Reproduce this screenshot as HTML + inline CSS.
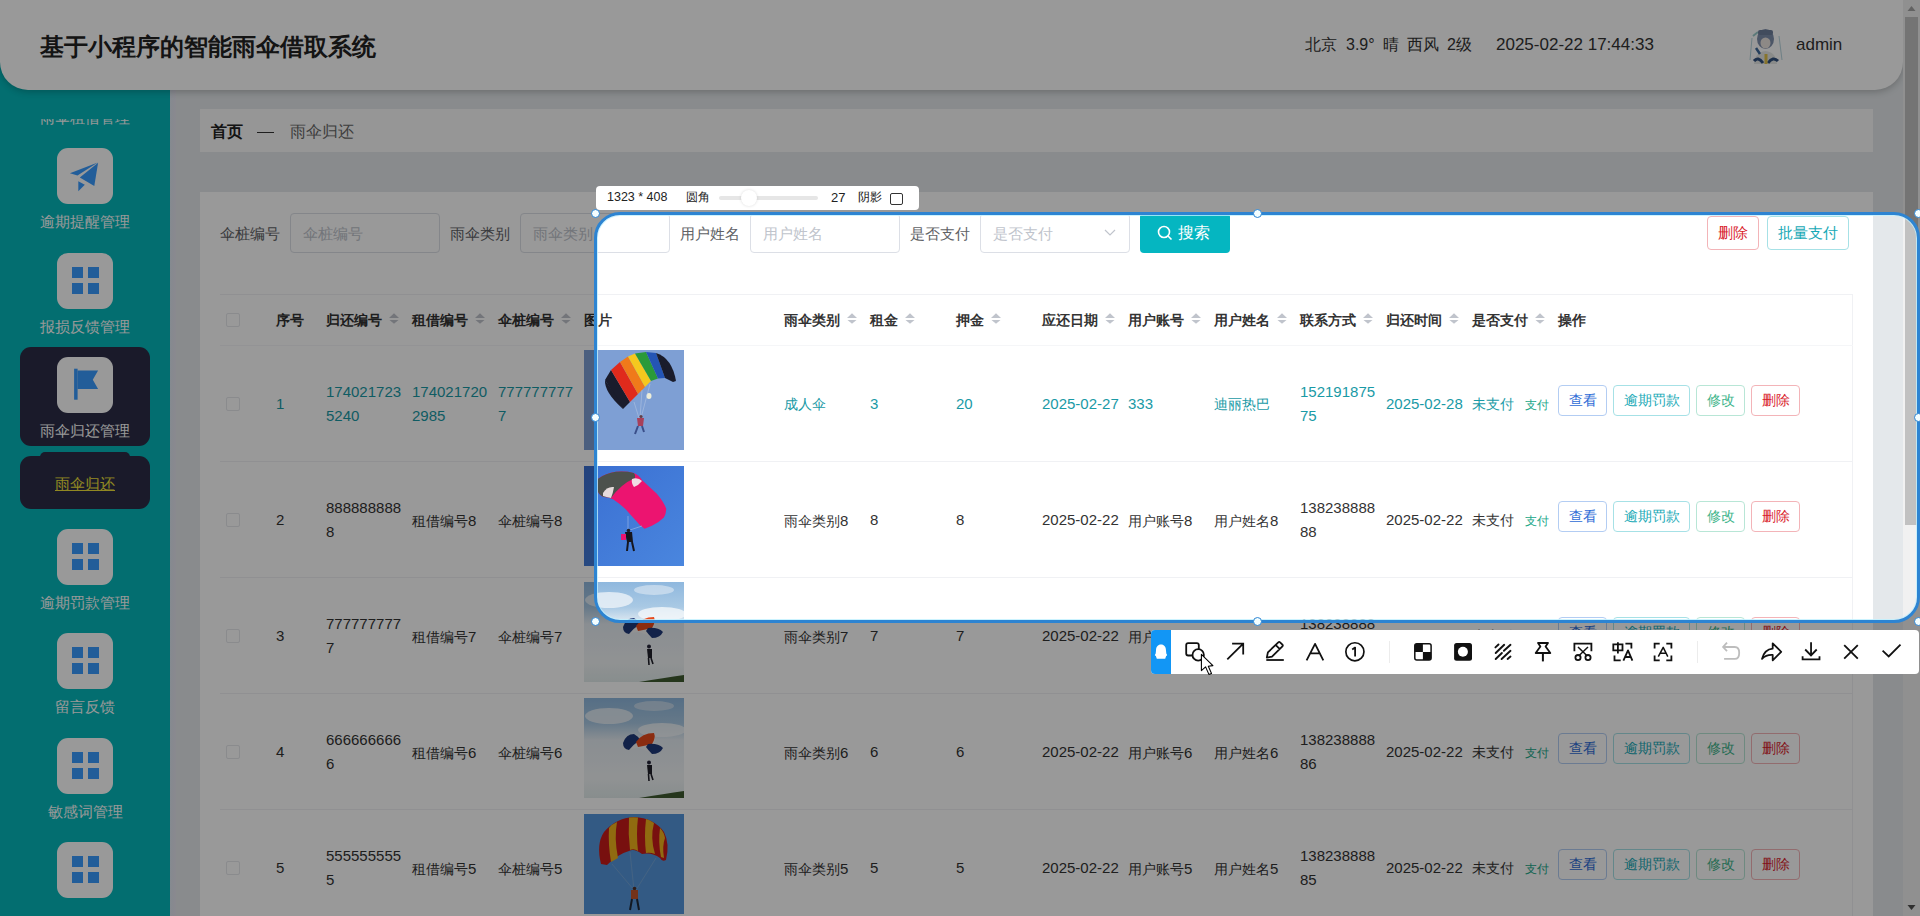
<!DOCTYPE html><html><head><meta charset="utf-8"><style>
*{margin:0;padding:0;box-sizing:border-box}
html,body{width:1920px;height:916px;overflow:hidden}
body{font-family:"Liberation Sans",sans-serif;background:#e4e8eb;position:relative;color:#333}
.a{position:absolute;white-space:nowrap}
#hdr{position:absolute;left:0;top:0;width:1903px;height:90px;background:#fff;border-radius:0 0 28px 28px;box-shadow:0 2px 7px rgba(0,0,0,.22);z-index:5}
#side{position:absolute;left:0;top:0;width:170px;height:916px;background:#05b8bb;z-index:1}
.ibox{position:absolute;left:57px;width:56px;height:56px;background:#fff;border-radius:11px}
.lbl{position:absolute;left:0;width:170px;text-align:center;color:#fff;font-size:15px;line-height:15px}
.grid i{position:absolute;width:11px;height:11px;background:#3a9cff}
#crumb{position:absolute;left:200px;top:109px;width:1673px;height:43px;background:#fafafa}
#card{position:absolute;left:200px;top:192px;width:1673px;height:724px;background:#fff}
.inp{position:absolute;top:213px;width:150px;height:40px;border:1px solid #dcdfe6;border-radius:4px;background:#fff}
.ph{position:absolute;color:#c0c4cc;font-size:15px;line-height:15px}
.fl{position:absolute;top:226px;color:#606266;font-size:15px;line-height:15px}
.th{position:absolute;top:313px;font-size:14px;line-height:14px;font-weight:bold;color:#333}
.si{position:absolute;width:10px;height:14px}
.td{position:absolute;font-size:14px;line-height:14px;color:#333}
.num{font-size:15px;line-height:15px}
.btn{position:absolute;height:31px;border:1px solid;border-radius:4px;background:#fff;font-size:14px;line-height:29px;text-align:center}
.cb{position:absolute;left:226px;width:14px;height:14px;border:1px solid #e6e8ec;border-radius:2px;background:#fff}
.hl{position:absolute;left:220px;width:1633px;height:1px;background:#f0f1f4}
</style></head><body>
<div id="side">
<div style="position:absolute;left:0;top:119px;width:170px;height:10px;overflow:hidden"><div class="lbl" style="top:-9px">雨伞租借管理</div></div>
<div style="position:absolute;left:20px;top:347px;width:130px;height:99px;background:#2c2c46;border-radius:11px"></div>
<div style="position:absolute;left:40px;top:452px;width:90px;height:8px;background:#2c2c46;border-radius:5px 5px 0 0"></div>
<div style="position:absolute;left:20px;top:456px;width:130px;height:53px;background:#2c2c46;border-radius:11px"></div>
<div class="lbl" style="top:476px;color:#f2e33a;text-decoration:underline">雨伞归还</div>
<div class="ibox" style="top:148px">
<svg width="56" height="56" style="position:absolute;left:0;top:0"><path d="M12.9 25.2 L40.8 14.5 L20.5 27.5 Z" fill="#3a9cff"/><path d="M22.8 29.4 L41.1 14.8 L37.3 37.9 Z" fill="#3a9cff"/><path d="M21.3 33.3 L27.8 36.7 L21.3 43.2 Z" fill="#3a9cff"/></svg>
</div>
<div class="lbl" style="top:214px">逾期提醒管理</div>
<div class="ibox" style="top:253px">
<div class="grid"><i style="left:15px;top:14px"></i><i style="left:31px;top:14px"></i><i style="left:15px;top:30px"></i><i style="left:31px;top:30px"></i></div>
</div>
<div class="lbl" style="top:319px">报损反馈管理</div>
<div class="ibox" style="top:357px">
<svg width="56" height="56" style="position:absolute;left:0;top:0"><rect x="17.1" y="11.7" width="3.5" height="31" fill="#3a9cff"/><path d="M20.5 13.6 L41.1 13.6 L35.8 22.8 L41.1 32 L20.5 32 Z" fill="#3a9cff"/></svg>
</div>
<div class="lbl" style="top:423px">雨伞归还管理</div>
<div class="ibox" style="top:529px">
<div class="grid"><i style="left:15px;top:14px"></i><i style="left:31px;top:14px"></i><i style="left:15px;top:30px"></i><i style="left:31px;top:30px"></i></div>
</div>
<div class="lbl" style="top:595px">逾期罚款管理</div>
<div class="ibox" style="top:633px">
<div class="grid"><i style="left:15px;top:14px"></i><i style="left:31px;top:14px"></i><i style="left:15px;top:30px"></i><i style="left:31px;top:30px"></i></div>
</div>
<div class="lbl" style="top:699px">留言反馈</div>
<div class="ibox" style="top:738px">
<div class="grid"><i style="left:15px;top:14px"></i><i style="left:31px;top:14px"></i><i style="left:15px;top:30px"></i><i style="left:31px;top:30px"></i></div>
</div>
<div class="lbl" style="top:804px">敏感词管理</div>
<div class="ibox" style="top:842px">
<div class="grid"><i style="left:15px;top:14px"></i><i style="left:31px;top:14px"></i><i style="left:15px;top:30px"></i><i style="left:31px;top:30px"></i></div>
</div>
</div>
<div id="hdr">
<div class="a" style="left:40px;top:33px;font-size:24px;line-height:28px;font-weight:bold;color:#222">基于小程序的智能雨伞借取系统</div>
<div class="a" style="left:1305px;top:37px;font-size:16px;line-height:16px;color:#333">北京</div>
<div class="a" style="left:1346px;top:37px;font-size:16px;line-height:16px;color:#333">3.9°</div>
<div class="a" style="left:1383px;top:37px;font-size:16px;line-height:16px;color:#333">晴</div>
<div class="a" style="left:1407px;top:37px;font-size:16px;line-height:16px;color:#333">西风</div>
<div class="a" style="left:1447px;top:37px;font-size:16px;line-height:16px;color:#333">2级</div>
<div class="a" style="left:1496px;top:36px;font-size:17px;line-height:17px;color:#333">2025-02-22 17:44:33</div>
<svg class="a" style="left:1746px;top:26px" width="38" height="40"><path d="M6 12 L4 34 M33 10 L36 34" stroke="#b8d6de" stroke-width="1"/><path d="M7 10 L12 6" stroke="#9cc" stroke-width="2"/><ellipse cx="19.5" cy="13" rx="8.5" ry="10" fill="#7f8fac"/><rect x="12" y="4" width="15" height="5" rx="2" fill="#6e7f9c"/><ellipse cx="19.5" cy="17" rx="5" ry="5.5" fill="#ece4e0"/><path d="M8 38 Q9 26 19.5 25 Q30 26 31 38 Z" fill="#e6e8e6"/><path d="M8 35 Q12 30 17 37 M22 37 Q27 30 32 35" stroke="#31507e" stroke-width="3" fill="none"/><path d="M10 22 L14 28" stroke="#3f6a9a" stroke-width="2.5"/><rect x="18.5" y="28" width="3" height="10" fill="#e2c24a"/></svg>
<div class="a" style="left:1796px;top:36px;font-size:17px;line-height:17px;color:#333">admin</div>
</div>
<div style="position:absolute;left:1903px;top:0;width:17px;height:916px;background:#f1f1f1;z-index:6"></div>
<div style="position:absolute;left:1905px;top:17px;width:13px;height:508px;background:#c1c1c1;z-index:6"></div>
<svg style="position:absolute;left:1903px;top:0;z-index:6" width="17" height="17"><path d="M4.5 11 L8.5 6 L12.5 11 Z" fill="#a3a3a3"/></svg>
<svg style="position:absolute;left:1903px;top:899px;z-index:6" width="17" height="17"><path d="M4.5 6 L8.5 11 L12.5 6 Z" fill="#505050"/></svg>
<div style="position:absolute;left:170px;top:90px;width:6px;height:826px;background:linear-gradient(to right,#dde6f0,#e6e4ee)"></div>
<div id="crumb"></div>
<div class="a" style="left:211px;top:124px;font-size:16px;line-height:16px;font-weight:bold;color:#222">首页</div>
<div class="a" style="left:257px;top:132px;width:17px;height:1px;background:#333"></div>
<div class="a" style="left:290px;top:124px;font-size:16px;line-height:16px;color:#666">雨伞归还</div>
<div id="card"></div>
<div class="fl" style="left:220px">伞桩编号</div>
<div class="inp" style="left:290px"></div>
<div class="ph" style="left:303px;top:226px">伞桩编号</div>
<div class="fl" style="left:450px">雨伞类别</div>
<div class="inp" style="left:520px"></div>
<div class="ph" style="left:533px;top:226px">雨伞类别</div>
<div class="fl" style="left:680px">用户姓名</div>
<div class="inp" style="left:750px"></div>
<div class="ph" style="left:763px;top:226px">用户姓名</div>
<div class="fl" style="left:910px">是否支付</div>
<div class="inp" style="left:980px"></div>
<div class="ph" style="left:993px;top:226px">是否支付</div>
<svg class="a" style="left:1104px;top:228px" width="12" height="10"><path d="M1 2 L6 7 L11 2" stroke="#c0c4cc" stroke-width="1.2" fill="none"/></svg>
<div class="a" style="left:1140px;top:213px;width:90px;height:40px;background:#05b6c1;border-radius:4px"></div>
<svg class="a" style="left:1157px;top:225px" width="16" height="16"><circle cx="7" cy="7" r="5.5" stroke="#fff" stroke-width="1.6" fill="none"/><path d="M11 11 L14.5 14.5" stroke="#fff" stroke-width="1.6"/></svg>
<div class="a" style="left:1178px;top:225px;font-size:16px;line-height:16px;color:#fff">搜索</div>
<div class="btn" style="left:1707px;top:216px;width:52px;height:34px;line-height:32px;font-size:15px;color:#d9232d;border-color:#f3b4b8">删除</div>
<div class="btn" style="left:1767px;top:216px;width:82px;height:34px;line-height:32px;font-size:15px;color:#17a9b6;border-color:#a6e1e6">批量支付</div>
<div class="hl" style="top:294px"></div>
<div style="position:absolute;left:1852px;top:294px;width:1px;height:622px;background:#f0f1f4"></div>
<div class="hl" style="top:345px;background:#f5f6f8"></div>
<div class="hl" style="top:461px"></div>
<div class="hl" style="top:577px"></div>
<div class="hl" style="top:693px"></div>
<div class="hl" style="top:809px"></div>
<div class="hl" style="top:925px"></div>
<div class="cb" style="top:313px"></div>
<div class="th" style="left:276px">序号</div>
<div class="th" style="left:326px">归还编号</div>
<svg class="si" style="left:389px;top:312px" width="10" height="16"><path d="M0 6 L5 1.2 L10 6 Z" fill="#c0c4cc"/><path d="M0.5 8 L5 11.8 L9.5 8 Z" fill="#c0c4cc"/></svg>
<div class="th" style="left:412px">租借编号</div>
<svg class="si" style="left:475px;top:312px" width="10" height="16"><path d="M0 6 L5 1.2 L10 6 Z" fill="#c0c4cc"/><path d="M0.5 8 L5 11.8 L9.5 8 Z" fill="#c0c4cc"/></svg>
<div class="th" style="left:498px">伞桩编号</div>
<svg class="si" style="left:561px;top:312px" width="10" height="16"><path d="M0 6 L5 1.2 L10 6 Z" fill="#c0c4cc"/><path d="M0.5 8 L5 11.8 L9.5 8 Z" fill="#c0c4cc"/></svg>
<div class="th" style="left:584px">图片</div>
<div class="th" style="left:784px">雨伞类别</div>
<svg class="si" style="left:847px;top:312px" width="10" height="16"><path d="M0 6 L5 1.2 L10 6 Z" fill="#c0c4cc"/><path d="M0.5 8 L5 11.8 L9.5 8 Z" fill="#c0c4cc"/></svg>
<div class="th" style="left:870px">租金</div>
<svg class="si" style="left:905px;top:312px" width="10" height="16"><path d="M0 6 L5 1.2 L10 6 Z" fill="#c0c4cc"/><path d="M0.5 8 L5 11.8 L9.5 8 Z" fill="#c0c4cc"/></svg>
<div class="th" style="left:956px">押金</div>
<svg class="si" style="left:991px;top:312px" width="10" height="16"><path d="M0 6 L5 1.2 L10 6 Z" fill="#c0c4cc"/><path d="M0.5 8 L5 11.8 L9.5 8 Z" fill="#c0c4cc"/></svg>
<div class="th" style="left:1042px">应还日期</div>
<svg class="si" style="left:1105px;top:312px" width="10" height="16"><path d="M0 6 L5 1.2 L10 6 Z" fill="#c0c4cc"/><path d="M0.5 8 L5 11.8 L9.5 8 Z" fill="#c0c4cc"/></svg>
<div class="th" style="left:1128px">用户账号</div>
<svg class="si" style="left:1191px;top:312px" width="10" height="16"><path d="M0 6 L5 1.2 L10 6 Z" fill="#c0c4cc"/><path d="M0.5 8 L5 11.8 L9.5 8 Z" fill="#c0c4cc"/></svg>
<div class="th" style="left:1214px">用户姓名</div>
<svg class="si" style="left:1277px;top:312px" width="10" height="16"><path d="M0 6 L5 1.2 L10 6 Z" fill="#c0c4cc"/><path d="M0.5 8 L5 11.8 L9.5 8 Z" fill="#c0c4cc"/></svg>
<div class="th" style="left:1300px">联系方式</div>
<svg class="si" style="left:1363px;top:312px" width="10" height="16"><path d="M0 6 L5 1.2 L10 6 Z" fill="#c0c4cc"/><path d="M0.5 8 L5 11.8 L9.5 8 Z" fill="#c0c4cc"/></svg>
<div class="th" style="left:1386px">归还时间</div>
<svg class="si" style="left:1449px;top:312px" width="10" height="16"><path d="M0 6 L5 1.2 L10 6 Z" fill="#c0c4cc"/><path d="M0.5 8 L5 11.8 L9.5 8 Z" fill="#c0c4cc"/></svg>
<div class="th" style="left:1472px">是否支付</div>
<svg class="si" style="left:1535px;top:312px" width="10" height="16"><path d="M0 6 L5 1.2 L10 6 Z" fill="#c0c4cc"/><path d="M0.5 8 L5 11.8 L9.5 8 Z" fill="#c0c4cc"/></svg>
<div class="th" style="left:1558px">操作</div>
<div class="cb" style="top:397px"></div>
<div class="td num" style="left:276px;top:396px;color:#1a9aa6;line-height:15px">1</div>
<div class="td num" style="left:326px;top:384px;color:#1a9aa6">174021723</div>
<div class="td num" style="left:326px;top:408px;color:#1a9aa6">5240</div>
<div class="td num" style="left:412px;top:384px;color:#1a9aa6">174021720</div>
<div class="td num" style="left:412px;top:408px;color:#1a9aa6">2985</div>
<div class="td num" style="left:498px;top:384px;color:#1a9aa6">777777777</div>
<div class="td num" style="left:498px;top:408px;color:#1a9aa6">7</div>
<div class="td" style="left:784px;top:397px;color:#1a9aa6;line-height:15px">成人伞</div>
<div class="td num" style="left:870px;top:396px;color:#1a9aa6;line-height:15px">3</div>
<div class="td num" style="left:956px;top:396px;color:#1a9aa6;line-height:15px">20</div>
<div class="td num" style="left:1042px;top:396px;color:#1a9aa6;line-height:15px">2025-02-27</div>
<div class="td num" style="left:1128px;top:396px;color:#1a9aa6;line-height:15px">333</div>
<div class="td" style="left:1214px;top:397px;color:#1a9aa6;line-height:15px">迪丽热巴</div>
<div class="td num" style="left:1300px;top:384px;color:#1a9aa6">152191875</div>
<div class="td num" style="left:1300px;top:408px;color:#1a9aa6">75</div>
<div class="td num" style="left:1386px;top:396px;color:#1a9aa6;line-height:15px">2025-02-28</div>
<div class="td" style="left:1472px;top:397px;color:#1a9aa6">未支付</div>
<div class="td" style="left:1525px;top:399px;font-size:12px;line-height:12px;color:#22a88a">支付</div>
<div class="btn" style="left:1558px;top:385px;width:49px;color:#2d6bd6;border-color:#b3cdf3">查看</div>
<div class="btn" style="left:1613px;top:385px;width:77px;color:#17a9b6;border-color:#a6e1e6">逾期罚款</div>
<div class="btn" style="left:1696px;top:385px;width:49px;color:#3fb58c;border-color:#b8e6d6">修改</div>
<div class="btn" style="left:1751px;top:385px;width:49px;color:#d9232d;border-color:#f3b4b8">删除</div>
<div class="a" style="left:584px;top:350px;width:100px;height:100px;overflow:hidden"><svg width="100" height="100"><rect width="100" height="100" fill="#7e9fd4"/><path d="M21.0 30.0 L27.0 20.0 L46.0 52.0 L39.0 59.0 Z" fill="#1a1c2c"/><path d="M27.0 20.0 L36.0 12.0 L54.0 44.0 L46.0 52.0 Z" fill="#e02a1c"/><path d="M36.0 12.0 L44.0 6.5 L61.0 37.0 L54.0 44.0 Z" fill="#f07a1a"/><path d="M44.0 6.5 L51.0 3.5 L67.0 31.0 L61.0 37.0 Z" fill="#f5c81e"/><path d="M51.0 3.5 L62.0 2.0 L74.0 28.5 L67.0 31.0 Z" fill="#2a9a3a"/><path d="M62.0 2.0 L72.0 3.0 L81.0 28.0 L74.0 28.5 Z" fill="#2455b5"/><path d="M72.0 3.0 L92.0 31.0 L89.0 32.0 L81.0 28.0 Z" fill="#1a1c2c"/><path d="M21 30 Q20 42 39 59 L35 50 Z" fill="#1a1c2c"/><path d="M72 3 Q88 8 92 31 L85 25Z" fill="#1a1c2c"/><ellipse cx="65" cy="46" rx="2.5" ry="3" fill="#eeeed8"/><path d="M50 52 L55 68 M58 40 L56 68 M66 34 L57 68" stroke="#c8d4e8" stroke-width="0.4"/><path d="M53 68 L60 68 L59 76 L54 76 Z" fill="#a8405a"/><circle cx="57" cy="66.5" r="1.6" fill="#604048"/><path d="M54 76 L51 84 M58 76 L60 82" stroke="#3a4f8a" stroke-width="2"/></svg></div>
<div class="cb" style="top:513px"></div>
<div class="td num" style="left:276px;top:512px;color:#333;line-height:15px">2</div>
<div class="td num" style="left:326px;top:500px;color:#333">888888888</div>
<div class="td num" style="left:326px;top:524px;color:#333">8</div>
<div class="td" style="left:412px;top:513px;color:#333;line-height:15px">租借编号<span style="font-size:15px">8</span></div>
<div class="td" style="left:498px;top:513px;color:#333;line-height:15px">伞桩编号<span style="font-size:15px">8</span></div>
<div class="td" style="left:784px;top:513px;color:#333;line-height:15px">雨伞类别<span style="font-size:15px">8</span></div>
<div class="td num" style="left:870px;top:512px;color:#333;line-height:15px">8</div>
<div class="td num" style="left:956px;top:512px;color:#333;line-height:15px">8</div>
<div class="td num" style="left:1042px;top:512px;color:#333;line-height:15px">2025-02-22</div>
<div class="td" style="left:1128px;top:513px;color:#333;line-height:15px">用户账号<span style="font-size:15px">8</span></div>
<div class="td" style="left:1214px;top:513px;color:#333;line-height:15px">用户姓名<span style="font-size:15px">8</span></div>
<div class="td num" style="left:1300px;top:500px;color:#333">138238888</div>
<div class="td num" style="left:1300px;top:524px;color:#333">88</div>
<div class="td num" style="left:1386px;top:512px;color:#333;line-height:15px">2025-02-22</div>
<div class="td" style="left:1472px;top:513px;color:#333">未支付</div>
<div class="td" style="left:1525px;top:515px;font-size:12px;line-height:12px;color:#22a88a">支付</div>
<div class="btn" style="left:1558px;top:501px;width:49px;color:#2d6bd6;border-color:#b3cdf3">查看</div>
<div class="btn" style="left:1613px;top:501px;width:77px;color:#17a9b6;border-color:#a6e1e6">逾期罚款</div>
<div class="btn" style="left:1696px;top:501px;width:49px;color:#3fb58c;border-color:#b8e6d6">修改</div>
<div class="btn" style="left:1751px;top:501px;width:49px;color:#d9232d;border-color:#f3b4b8">删除</div>
<div class="a" style="left:584px;top:466px;width:100px;height:100px;overflow:hidden"><svg width="100" height="100"><defs><linearGradient id="pk" x1="0" y1="0" x2="1" y2="1"><stop offset="0" stop-color="#3a6fd2"/><stop offset="1" stop-color="#4a86de"/></linearGradient></defs><rect width="100" height="100" fill="url(#pk)"/><path d="M13.8 12.9 Q22 7 31.8 5.8 Q42 5 49.8 7 Q55 9 58.2 14.2 L72.6 27.4 Q80 36 82.3 43 Q82 48 79.9 51.4 Q74 57 67.9 59.8 L60.6 62.8 Q56 60 52.2 55 L41.4 43 Q35 37 29.4 33.4 Q24 31 19.8 31 Q15 29 13.8 25 Z" fill="#ec1470"/><path d="M13.8 12.9 Q22 7 31.8 5.8 Q42 5 49.8 7 Q52 9 51 12 Q44 15 38 20 Q32 25 27 32 Q23 31 19.8 31 Q15 29 13.8 25 Z" fill="#4c514c"/><path d="M19 27 Q23 20 30 21 Q29 27 27 32 Q22 31 19 30Z" fill="#e6dcdc"/><path d="M48 13 Q54 11 58 15 Q55 19 50 21 Q47 17 48 13Z" fill="#f0dce4"/><path d="M44 50 L44 64 M58 60 L46 64" stroke="#cfd8ee" stroke-width="0.4"/><path d="M41 66 L48 66 L49 76 L43 76 Z" fill="#16161e"/><rect x="37" y="68" width="5" height="6" fill="#ec1470"/><circle cx="44.5" cy="64.5" r="1.8" fill="#202028"/><path d="M44 76 L43 85 M48 76 L50 85" stroke="#16161e" stroke-width="2"/></svg></div>
<div class="cb" style="top:629px"></div>
<div class="td num" style="left:276px;top:628px;color:#333;line-height:15px">3</div>
<div class="td num" style="left:326px;top:616px;color:#333">777777777</div>
<div class="td num" style="left:326px;top:640px;color:#333">7</div>
<div class="td" style="left:412px;top:629px;color:#333;line-height:15px">租借编号<span style="font-size:15px">7</span></div>
<div class="td" style="left:498px;top:629px;color:#333;line-height:15px">伞桩编号<span style="font-size:15px">7</span></div>
<div class="td" style="left:784px;top:629px;color:#333;line-height:15px">雨伞类别<span style="font-size:15px">7</span></div>
<div class="td num" style="left:870px;top:628px;color:#333;line-height:15px">7</div>
<div class="td num" style="left:956px;top:628px;color:#333;line-height:15px">7</div>
<div class="td num" style="left:1042px;top:628px;color:#333;line-height:15px">2025-02-22</div>
<div class="td" style="left:1128px;top:629px;color:#333;line-height:15px">用户账号<span style="font-size:15px">7</span></div>
<div class="td" style="left:1214px;top:629px;color:#333;line-height:15px">用户姓名<span style="font-size:15px">7</span></div>
<div class="td num" style="left:1300px;top:616px;color:#333">138238888</div>
<div class="td num" style="left:1300px;top:640px;color:#333">87</div>
<div class="td num" style="left:1386px;top:628px;color:#333;line-height:15px">2025-02-22</div>
<div class="td" style="left:1472px;top:629px;color:#333">未支付</div>
<div class="td" style="left:1525px;top:631px;font-size:12px;line-height:12px;color:#22a88a">支付</div>
<div class="btn" style="left:1558px;top:617px;width:49px;color:#2d6bd6;border-color:#b3cdf3">查看</div>
<div class="btn" style="left:1613px;top:617px;width:77px;color:#17a9b6;border-color:#a6e1e6">逾期罚款</div>
<div class="btn" style="left:1696px;top:617px;width:49px;color:#3fb58c;border-color:#b8e6d6">修改</div>
<div class="btn" style="left:1751px;top:617px;width:49px;color:#d9232d;border-color:#f3b4b8">删除</div>
<div class="a" style="left:584px;top:582px;width:100px;height:100px;overflow:hidden"><svg width="100" height="100"><defs><linearGradient id="sk2" x1="0" y1="0" x2="0" y2="1"><stop offset="0" stop-color="#8fb8de"/><stop offset="0.25" stop-color="#a9c9e4"/><stop offset="0.42" stop-color="#e6edf3"/><stop offset="0.8" stop-color="#f1f4f6"/><stop offset="1" stop-color="#e2ecec"/></linearGradient></defs><rect width="100" height="100" fill="url(#sk2)"/><ellipse cx="25" cy="18" rx="24" ry="8" fill="#f2f6fa" opacity="0.75"/><ellipse cx="70" cy="8" rx="20" ry="5" fill="#dfeaf4" opacity="0.6"/><ellipse cx="78" cy="32" rx="24" ry="7" fill="#f4f7fa" opacity="0.8"/><path d="M39 45 Q42 36 50 36 L58 41 Q64 34 70 35 Q72 40 70 45 Q76 46 79 50 Q76 56 68 56 Q62 52 55 50 Q48 50 44 52 Q39 51 39 45 Z" fill="#f3f3f3"/><path d="M39 45 Q42 36 50 36 Q54 38 56 42 Q50 46 45 52 Q39 51 39 45 Z" fill="#1f3a7a"/><path d="M52 44 Q58 35 70 35 Q72 40 68 46 Q60 48 54 49 Z" fill="#e84a1c"/><path d="M64 46 Q74 45 79 50 Q76 56 68 56 Q64 52 62 49 Z" fill="#1f3a7a"/><circle cx="65" cy="64.5" r="2" fill="#26263a"/><path d="M63 67 L68 67 L68 76 L64 76 Z" fill="#20202a"/><path d="M64.5 76 L65 83 M67 76 L69 82" stroke="#20202a" stroke-width="1.6"/><path d="M55 100 Q80 96 100 93 L100 100 Z" fill="#3e5a30"/></svg></div>
<div class="cb" style="top:745px"></div>
<div class="td num" style="left:276px;top:744px;color:#333;line-height:15px">4</div>
<div class="td num" style="left:326px;top:732px;color:#333">666666666</div>
<div class="td num" style="left:326px;top:756px;color:#333">6</div>
<div class="td" style="left:412px;top:745px;color:#333;line-height:15px">租借编号<span style="font-size:15px">6</span></div>
<div class="td" style="left:498px;top:745px;color:#333;line-height:15px">伞桩编号<span style="font-size:15px">6</span></div>
<div class="td" style="left:784px;top:745px;color:#333;line-height:15px">雨伞类别<span style="font-size:15px">6</span></div>
<div class="td num" style="left:870px;top:744px;color:#333;line-height:15px">6</div>
<div class="td num" style="left:956px;top:744px;color:#333;line-height:15px">6</div>
<div class="td num" style="left:1042px;top:744px;color:#333;line-height:15px">2025-02-22</div>
<div class="td" style="left:1128px;top:745px;color:#333;line-height:15px">用户账号<span style="font-size:15px">6</span></div>
<div class="td" style="left:1214px;top:745px;color:#333;line-height:15px">用户姓名<span style="font-size:15px">6</span></div>
<div class="td num" style="left:1300px;top:732px;color:#333">138238888</div>
<div class="td num" style="left:1300px;top:756px;color:#333">86</div>
<div class="td num" style="left:1386px;top:744px;color:#333;line-height:15px">2025-02-22</div>
<div class="td" style="left:1472px;top:745px;color:#333">未支付</div>
<div class="td" style="left:1525px;top:747px;font-size:12px;line-height:12px;color:#22a88a">支付</div>
<div class="btn" style="left:1558px;top:733px;width:49px;color:#2d6bd6;border-color:#b3cdf3">查看</div>
<div class="btn" style="left:1613px;top:733px;width:77px;color:#17a9b6;border-color:#a6e1e6">逾期罚款</div>
<div class="btn" style="left:1696px;top:733px;width:49px;color:#3fb58c;border-color:#b8e6d6">修改</div>
<div class="btn" style="left:1751px;top:733px;width:49px;color:#d9232d;border-color:#f3b4b8">删除</div>
<div class="a" style="left:584px;top:698px;width:100px;height:100px;overflow:hidden"><svg width="100" height="100"><defs><linearGradient id="sk3" x1="0" y1="0" x2="0" y2="1"><stop offset="0" stop-color="#8fb8de"/><stop offset="0.25" stop-color="#a9c9e4"/><stop offset="0.42" stop-color="#e6edf3"/><stop offset="0.8" stop-color="#f1f4f6"/><stop offset="1" stop-color="#e2ecec"/></linearGradient></defs><rect width="100" height="100" fill="url(#sk3)"/><ellipse cx="25" cy="18" rx="24" ry="8" fill="#f2f6fa" opacity="0.75"/><ellipse cx="70" cy="8" rx="20" ry="5" fill="#dfeaf4" opacity="0.6"/><ellipse cx="78" cy="32" rx="24" ry="7" fill="#f4f7fa" opacity="0.8"/><path d="M39 45 Q42 36 50 36 L58 41 Q64 34 70 35 Q72 40 70 45 Q76 46 79 50 Q76 56 68 56 Q62 52 55 50 Q48 50 44 52 Q39 51 39 45 Z" fill="#f3f3f3"/><path d="M39 45 Q42 36 50 36 Q54 38 56 42 Q50 46 45 52 Q39 51 39 45 Z" fill="#1f3a7a"/><path d="M52 44 Q58 35 70 35 Q72 40 68 46 Q60 48 54 49 Z" fill="#e84a1c"/><path d="M64 46 Q74 45 79 50 Q76 56 68 56 Q64 52 62 49 Z" fill="#1f3a7a"/><circle cx="65" cy="64.5" r="2" fill="#26263a"/><path d="M63 67 L68 67 L68 76 L64 76 Z" fill="#20202a"/><path d="M64.5 76 L65 83 M67 76 L69 82" stroke="#20202a" stroke-width="1.6"/><path d="M55 100 Q80 96 100 93 L100 100 Z" fill="#3e5a30"/></svg></div>
<div class="cb" style="top:861px"></div>
<div class="td num" style="left:276px;top:860px;color:#333;line-height:15px">5</div>
<div class="td num" style="left:326px;top:848px;color:#333">555555555</div>
<div class="td num" style="left:326px;top:872px;color:#333">5</div>
<div class="td" style="left:412px;top:861px;color:#333;line-height:15px">租借编号<span style="font-size:15px">5</span></div>
<div class="td" style="left:498px;top:861px;color:#333;line-height:15px">伞桩编号<span style="font-size:15px">5</span></div>
<div class="td" style="left:784px;top:861px;color:#333;line-height:15px">雨伞类别<span style="font-size:15px">5</span></div>
<div class="td num" style="left:870px;top:860px;color:#333;line-height:15px">5</div>
<div class="td num" style="left:956px;top:860px;color:#333;line-height:15px">5</div>
<div class="td num" style="left:1042px;top:860px;color:#333;line-height:15px">2025-02-22</div>
<div class="td" style="left:1128px;top:861px;color:#333;line-height:15px">用户账号<span style="font-size:15px">5</span></div>
<div class="td" style="left:1214px;top:861px;color:#333;line-height:15px">用户姓名<span style="font-size:15px">5</span></div>
<div class="td num" style="left:1300px;top:848px;color:#333">138238888</div>
<div class="td num" style="left:1300px;top:872px;color:#333">85</div>
<div class="td num" style="left:1386px;top:860px;color:#333;line-height:15px">2025-02-22</div>
<div class="td" style="left:1472px;top:861px;color:#333">未支付</div>
<div class="td" style="left:1525px;top:863px;font-size:12px;line-height:12px;color:#22a88a">支付</div>
<div class="btn" style="left:1558px;top:849px;width:49px;color:#2d6bd6;border-color:#b3cdf3">查看</div>
<div class="btn" style="left:1613px;top:849px;width:77px;color:#17a9b6;border-color:#a6e1e6">逾期罚款</div>
<div class="btn" style="left:1696px;top:849px;width:49px;color:#3fb58c;border-color:#b8e6d6">修改</div>
<div class="btn" style="left:1751px;top:849px;width:49px;color:#d9232d;border-color:#f3b4b8">删除</div>
<div class="a" style="left:584px;top:814px;width:100px;height:100px;overflow:hidden"><svg width="100" height="100"><rect width="100" height="100" fill="#5597dc"/><path d="M17 50 Q12 30 20 18 Q32 4 50 3 Q70 4 80 18 Q86 30 82 46 Q78 48 76 44 Q68 38 58 40 Q50 34 45 37 Q34 40 23 51 Z" fill="#c81c1a"/><path d="M25 14 Q28 10 33 8 Q30 24 34 44 L27 48 Q24 30 25 14Z" fill="#f0b21c"/><path d="M45 3.5 Q50 3 54 3.5 Q52 20 54 37 Q50 34 46 36 Q44 20 45 3.5Z" fill="#f0b21c"/><path d="M62 5 Q66 6 70 9 Q66 24 71 40 Q66 38 62 39 Q60 22 62 5Z" fill="#f0b21c"/><path d="M76 14 Q80 18 81 24 Q78 32 80 44 L77 43 Q74 28 76 14Z" fill="#f0b21c"/><path d="M28 50 L50 76 M72 44 L52 76 M46 38 L50 76" stroke="#a0b8d8" stroke-width="0.4"/><circle cx="50.5" cy="74.5" r="1.8" fill="#503028"/><path d="M47 76 L54 76 L54 85 L47 85 Z" fill="#c05428"/><path d="M48 85 L46 96 M53 85 L55 96" stroke="#1e2838" stroke-width="2"/></svg></div>

<div style="position:absolute;left:596px;top:213px;width:1323px;height:409px;border-radius:25px;box-shadow:0 0 0 4000px rgba(0,0,0,0.4);z-index:20"></div>
<div style="position:absolute;left:594px;top:212px;width:1326px;height:411px;border:3px solid #2d84d2;border-radius:26px;box-shadow:inset 0 0 0 1px rgba(190,240,255,.8);z-index:21"></div>
<div style="position:absolute;left:590.8px;top:208.9px;width:9px;height:9px;border-radius:50%;background:#f4feff;border:1.3px solid #2d84d2;z-index:22"></div>
<div style="position:absolute;left:1253.4px;top:208.9px;width:9px;height:9px;border-radius:50%;background:#f4feff;border:1.3px solid #2d84d2;z-index:22"></div>
<div style="position:absolute;left:1914.0px;top:208.9px;width:9px;height:9px;border-radius:50%;background:#f4feff;border:1.3px solid #2d84d2;z-index:22"></div>
<div style="position:absolute;left:590.8px;top:413.1px;width:9px;height:9px;border-radius:50%;background:#f4feff;border:1.3px solid #2d84d2;z-index:22"></div>
<div style="position:absolute;left:1914.0px;top:413.1px;width:9px;height:9px;border-radius:50%;background:#f4feff;border:1.3px solid #2d84d2;z-index:22"></div>
<div style="position:absolute;left:590.8px;top:616.5px;width:9px;height:9px;border-radius:50%;background:#f4feff;border:1.3px solid #2d84d2;z-index:22"></div>
<div style="position:absolute;left:1253.4px;top:616.5px;width:9px;height:9px;border-radius:50%;background:#f4feff;border:1.3px solid #2d84d2;z-index:22"></div>
<div style="position:absolute;left:1914.0px;top:616.5px;width:9px;height:9px;border-radius:50%;background:#f4feff;border:1.3px solid #2d84d2;z-index:22"></div>

<div style="position:absolute;left:596px;top:186px;width:323px;height:24px;background:#fff;border-radius:4px;z-index:22"></div>
<div class="a" style="left:607px;top:191px;font-size:12.5px;line-height:13px;color:#222;z-index:23">1323 * 408</div>
<div class="a" style="left:686px;top:191px;font-size:12px;line-height:13px;color:#222;z-index:23">圆角</div>
<div class="a" style="left:719px;top:196px;width:99px;height:4px;background:#e6e6e6;border-radius:2px;z-index:23"></div>
<div class="a" style="left:741px;top:190px;width:16px;height:16px;background:#fff;border-radius:50%;box-shadow:0 0 3px rgba(0,0,0,.15);z-index:23"></div>
<div class="a" style="left:831px;top:191px;font-size:13px;line-height:13px;color:#222;z-index:23">27</div>
<div class="a" style="left:858px;top:191px;font-size:12px;line-height:13px;color:#222;z-index:23">阴影</div>
<div class="a" style="left:890px;top:192.5px;width:12.5px;height:12px;border:1px solid #333;border-radius:2px;z-index:23"></div>
<div style="position:absolute;left:1151px;top:630px;width:768px;height:44px;background:#fff;border-radius:4px;overflow:hidden;z-index:22"><div style="position:absolute;left:0;top:0;width:20px;height:44px;background:#1296f5"></div></div><svg style="position:absolute;left:0;top:0;z-index:23" width="1920" height="916"><path d="M1161 644.5 C1164.2 644.5 1166 647 1166 650.5 L1166.3 653.5 C1167.5 655 1167.2 656 1166.2 655.8 L1165.2 658.8 L1156.8 658.8 L1155.8 655.8 C1154.8 656 1154.5 655 1155.7 653.5 L1156 650.5 C1156 647 1157.8 644.5 1161 644.5 Z" fill="#fff"/><rect x="1186.2" y="643.1" width="12.6" height="12.4" rx="2" stroke="#111" stroke-width="1.8" fill="none"/><circle cx="1198.2" cy="654.9" r="5.7" fill="#fff" stroke="#111" stroke-width="1.8" fill="none"/><path d="M1227.3 659.4 L1243.2 643.7 M1232.1 643.7 L1243.2 643.7 L1243.2 654.6" stroke="#111" stroke-width="1.8" fill="none"/><path d="M1266.8 657.6 L1267.9 652.4 L1278.3 642.3 Q1279.2 641.5 1280.1 642.3 L1282.4 644.6 Q1283.2 645.5 1282.4 646.3 L1272 656.6 Z M1275.8 645.1 L1279.6 648.9" stroke="#111" stroke-width="1.8" fill="none" stroke-linejoin="round"/><path d="M1266.3 660 L1283.8 660" stroke="#111" stroke-width="1.8" fill="none"/><path d="M1306.6 660.3 L1315.05 643.9 L1323.3 660.3 M1310.4 653.4 L1319.7 653.4" stroke="#111" stroke-width="1.8" fill="none" stroke-linejoin="round"/><circle cx="1354.9" cy="651.8" r="9.05" stroke="#111" stroke-width="1.7" fill="none"/><path d="M1352.2 649.6 L1355.1 647.6 L1355.1 656.4" stroke="#111" stroke-width="1.8" fill="none" stroke-linejoin="round"/><rect x="1389" y="641" width="1" height="22" fill="#ececec"/><rect x="1697" y="641" width="1" height="22" fill="#ececec"/><rect x="1414.8" y="643.7" width="16.3" height="16.3" rx="2" stroke="#111" stroke-width="1.5" fill="#fff"/><path d="M1414.8 651.9 L1414.8 645.7 Q1414.8 643.7 1416.8 643.7 L1422.9 643.7 L1422.9 651.9 Z" fill="#111"/><path d="M1422.9 651.9 L1431.1 651.9 L1431.1 658 Q1431.1 660 1429.1 660 L1422.9 660 Z" fill="#111"/><rect x="1454.1" y="643" width="17.9" height="17.8" rx="2.5" fill="#111"/><circle cx="1462.9" cy="651.8" r="5" fill="#fff"/><path d="M1495.4 647.4 L1498.5 644.5 M1495.7 653 L1504.2 644.8 M1503.9 650.8 L1510.5 644.8 M1495.7 659 L1501.9 653 M1501.6 659 L1510.5 650.8 M1507.6 659 L1510.5 656.5" stroke="#111" stroke-width="1.9" stroke-linecap="round"/><path d="M1538 643 L1548 643 L1545.6 646.4 L1550.3 653 L1535.7 653 L1540.4 646.4 Z" stroke="#111" stroke-width="1.8" fill="none" stroke-linejoin="round"/><path d="M1542.9 653 L1542.9 661.4" stroke="#111" stroke-width="2" fill="none"/><path d="M1574.4 651.3 L1574.4 643.7 L1591.4 643.7 L1591.4 651.3" stroke="#111" stroke-width="1.8" fill="none"/><path d="M1578 647 L1586.5 655.2 M1588 647 L1579.4 655.2" stroke="#111" stroke-width="1.5" fill="none"/><circle cx="1578" cy="657.6" r="2.6" stroke="#111" stroke-width="1.8" fill="none"/><circle cx="1588" cy="657.6" r="2.6" stroke="#111" stroke-width="1.8" fill="none"/><path d="M1613.3 644.4 L1622.5 644.4 L1622.5 650.4 L1613.3 650.4 Z M1617.9 642.2 L1617.9 653.6" stroke="#111" stroke-width="1.8" fill="none"/><path d="M1625.4 643.7 L1631.4 643.7 L1631.4 648.6 M1614.5 655.4 L1614.5 660.3 L1620.7 660.3" stroke="#111" stroke-width="1.8" fill="none"/><path d="M1623.4 660.7 L1628 650.4 L1632.4 660.7 M1625 657 L1631 657" stroke="#111" stroke-width="1.8" fill="none" stroke-linejoin="round"/><path d="M1654.6 648.6 L1654.6 643.7 L1659.7 643.7 M1666.3 643.7 L1671.4 643.7 L1671.4 648.6 M1654.6 655.4 L1654.6 660.3 L1659.7 660.3 M1666.3 660.3 L1671.4 660.3 L1671.4 655.4" stroke="#111" stroke-width="1.8" fill="none"/><path d="M1658.3 656.6 L1663.2 647.4 L1667.8 656.6 M1660 653.2 L1666.3 653.2" stroke="#111" stroke-width="1.5" fill="none" stroke-linejoin="round"/><path d="M1727 642.6 L1723.1 647 L1727 651.1 M1723.1 647 L1734.8 647 Q1739.2 647 1739.2 652.9 Q1739.2 658.9 1734.8 658.9 L1724.1 658.9" stroke="#bdbdbd" stroke-width="1.8" fill="none"/><path d="M1762 658.9 Q1764.5 649.2 1772.7 648.6 L1772.7 643.3 L1781.2 651.8 L1772.7 660.3 L1772.7 655 Q1766 654.6 1762 658.9 Z" stroke="#111" stroke-width="1.8" fill="none" stroke-linejoin="round"/><path d="M1811.05 642.2 L1811.05 655.2 M1805.2 649.5 L1811 655.4 L1816.7 649.5 M1802.6 656.2 L1802.6 659.3 L1819.5 659.3 L1819.5 656.2" stroke="#111" stroke-width="1.8" fill="none"/><path d="M1844.2 645.1 L1857.8 658.7 M1857.8 645.1 L1844.2 658.7" stroke="#111" stroke-width="1.8" fill="none"/><path d="M1882.6 650.6 L1888.7 656.4 L1900.5 644.6" stroke="#111" stroke-width="1.8" fill="none"/><path d="M1201.4 654.3 L1201.4 670.6 L1205.6 666.9 L1208.9 674.4 L1211.5 673.4 L1208.3 666.2 L1212.9 665.6 Z" fill="#fff" stroke="#000" stroke-width="1.1" stroke-linejoin="round"/></svg>
</body></html>
